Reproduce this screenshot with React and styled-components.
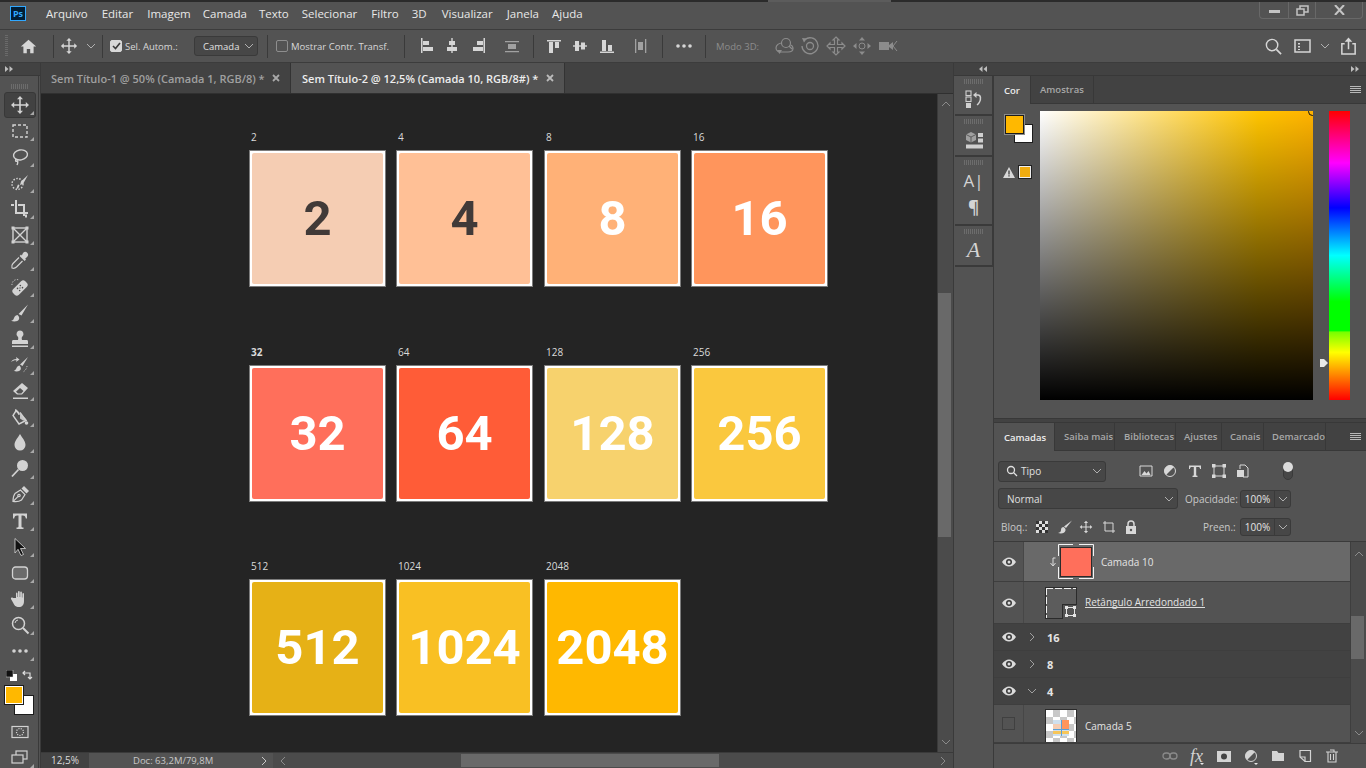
import React from 'react';
import styled, { createGlobalStyle } from 'styled-components';

const GlobalStyle = createGlobalStyle`
  html, body { margin: 0; padding: 0; background: #535353; overflow: hidden; }
  * { box-sizing: border-box; }
  body { font-family: "Open Sans", "Liberation Sans", sans-serif; color: #e4e4e4; }
`;

const Shell = styled.div`
  width: 1366px; height: 768px; display: flex; flex-direction: column; background: #535353; overflow: hidden;
`;
const TopEdge = styled.div`
  height: 2px; flex: none;
  background: linear-gradient(to right, #2b2b2b 768px, #5c5c5c 768px, #5c5c5c 891px, #2b2b2b 891px);
`;

/* menu */
const MenuBar = styled.div`
  height: 28px; flex: none; display: flex; align-items: center; background: #535353; padding: 0 0 4px 10px;
  border-bottom: 1px solid #3c3c3c;
`;
const Logo = styled.div`
  width: 16px; height: 15px; background: #001e36; border: 1px solid #31a8ff; color: #31a8ff;
  font-size: 9px; font-weight: 700; display: flex; align-items: center; justify-content: center; margin-right: 20px; line-height: 1;
`;
const MenuItem = styled.span`
  font-size: 11.5px; color: #e8e8e8; margin-right: ${p => p.$mr}px; white-space: nowrap;
`;
const WindowBox = styled.div`
  margin-left: auto; margin-right: 3px; align-self: flex-start; height: 17px; display: flex;
  border: 1px solid #686868; border-top: none; border-radius: 0 0 4px 4px; color: #c4c4c4;
`;
const WindowBtn = styled.div`
  width: ${p => p.$w}px; display: flex; align-items: center; justify-content: center;
  & + & { border-left: 1px solid #686868; }
`;

/* options bar */
const OptionsBar = styled.div`
  height: 33px; flex: none; display: flex; align-items: center; background: #535353; color: #d6d6d6;
  border-bottom: 1px solid #3c3c3c;
`;
const Grip = styled.div`
  width: 14px; height: 22px; margin-left: 0; flex: none;
  background: repeating-linear-gradient(to bottom, #6a6a6a 0 1px, transparent 1px 2px) 5px 0 / 3px 100% no-repeat;
`;
const Slot = styled.div`
  width: ${p => p.$w || 26}px; margin-left: ${p => p.$ml || 0}px; flex: none; height: 24px;
  display: flex; align-items: center; justify-content: center; color: ${p => p.$dim ? '#8c8c8c' : 'inherit'};
`;
const Sep = styled.div`
  width: 1px; height: 23px; background: #3a3a3a; flex: none; margin-left: ${p => p.$ml || 0}px;
`;
const Check = styled.div`
  width: 12px; height: 12px; border-radius: 2px; flex: none; margin-left: ${p => p.$ml}px;
  border: 1px solid ${p => p.$on ? '#d8d8d8' : '#8e8e8e'}; background: ${p => p.$on ? '#d8d8d8' : 'transparent'};
  color: #3a3a3a; display: flex; align-items: center; justify-content: center;
`;
const OptLabel = styled.span`
  font-size: 9.5px; width: ${p => p.$w}px; margin-left: ${p => p.$ml || 0}px; flex: none; white-space: nowrap;
  color: ${p => p.$dim ? '#8c8c8c' : '#d8d8d8'};
`;
const SmallSelect = styled.div`
  width: 64px; height: 20px; flex: none; background: #474747; border: 1px solid #3a3a3a; border-radius: 3px;
  font-size: 9.5px; padding-left: 8px; display: flex; align-items: center; justify-content: space-between; padding-right: 3px; color: #e0e0e0;
`;

/* workspace */
const Workspace = styled.div`
  flex: 1; min-height: 0; display: flex;
`;
const LeftColumn = styled.div`
  width: 41px; flex: none; display: flex; flex-direction: column;
  border-right: 1px solid #3a3a3a;
`;
const Strip = styled.div`
  height: 13px; flex: none; background: #424242; border-bottom: 1px solid #383838; color: #bdbdbd;
  display: flex; align-items: center; justify-content: ${p => p.$between ? 'space-between' : 'flex-start'};
  padding: ${p => p.$between ? '0 7px 0 25px' : '0 0 0 5px'};
`;
const GripRow = styled.div`
  height: 5px; flex: none; margin: ${p => p.$m || '3px auto 2px'}; width: ${p => p.$w || 20}px;
  background: repeating-linear-gradient(to right, #6c6c6c 0 1px, transparent 1px 2px);
`;
const ToolList = styled.div`
  flex: 1; display: flex; flex-direction: column; align-items: center; color: #d2d2d2; padding: 0 0 0 1px;
  border-right: 1px solid #3a3a3a; margin-right: 1px; position: relative;
`;
const Tool = styled.div`
  width: 32px; height: 26px; flex: none; position: relative; display: flex; align-items: center; justify-content: center;
  margin-top: ${p => p.$mt || 0}px;
  background: ${p => p.$active ? '#424242' : 'transparent'};
  border: 1px solid ${p => p.$active ? '#383838' : 'transparent'}; border-radius: 3px;
  &::after {
    content: ""; display: ${p => p.$plain ? 'none' : 'block'}; position: absolute; right: 1px; bottom: 2px; width: 0; height: 0;
    border-left: 4px solid transparent; border-bottom: 4px solid #a8a8a8;
  }
`;
const ColorTools = styled.div`
  width: 32px; height: 46px; position: relative; flex: none; margin-top: 6px;
`;
const SwatchBox = styled.div`
  position: absolute; left: ${p => p.$x}px; top: ${p => p.$y}px; width: ${p => p.$s}px; height: ${p => p.$s}px;
  background: ${p => p.$c}; border: 1px solid ${p => p.$b || '#111'};
  box-shadow: ${p => p.$ring ? '0 0 0 1px ' + p.$ring : 'none'};
`;
const ColorIcon = styled.div`
  position: absolute; left: ${p => p.$x}px; top: ${p => p.$y}px; line-height: 0;
`;

const Center = styled.div`
  flex: 1; min-width: 0; display: flex; flex-direction: column; border-right: 1px solid #3a3a3a;
`;
const TabBar = styled.div`
  height: 31px; flex: none; display: flex; background: #424242; border-bottom: 1px solid #303030;
`;
const DocTab = styled.div`
  width: ${p => p.$w}px; flex: none; display: flex; align-items: center; padding-left: ${p => p.$active ? 11 : 10}px;
  background: ${p => p.$active ? '#535353' : '#424242'}; border-right: 1px solid #333;
  color: ${p => p.$active ? '#ededed' : '#a0a0a0'}; font-size: 11px; font-weight: 600; white-space: nowrap;
`;
const TabClose = styled.span`
  margin-left: auto; margin-right: 10px; line-height: 0; color: ${p => p.$active ? '#bbb' : '#a8a8a8'};
`;
const DocRow = styled.div`
  flex: 1; min-height: 0; display: flex;
`;
const Canvas = styled.div`
  flex: 1; background: #242424; padding: 36px 0 0 208px;
  display: grid; grid-template-columns: 147px 148px 147px 137px; row-gap: 57.5px; align-content: start;
`;
const Cell = styled.div`
  display: flex; flex-direction: column;
`;
const TileLabel = styled.div`
  height: 20px; padding-left: 2px; font-size: 10px; line-height: 14px;
  color: #dadada; font-weight: ${p => p.$bold ? 700 : 400};
`;
const Tile = styled.div`
  width: 137px; height: 137px; background: #fff; border: 1px solid #7c7c7c; padding: 2px; display: flex;
`;
const TileFace = styled.div`
  flex: 1; border-radius: 2px; background: ${p => p.$bg}; color: ${p => p.$fg};
  display: flex; align-items: center; justify-content: center;
  font-family: Roboto, "Liberation Sans", sans-serif; font-weight: 700; font-size: 49px; line-height: 1;
`;
const VScroll = styled.div`
  width: 16px; flex: none; background: #4b4b4b; border-left: 1px solid #3a3a3a; display: flex; flex-direction: column;
  align-items: center; justify-content: space-between; padding: 5px 0; color: #8b8b8b; position: relative;
`;
const VThumb = styled.div`
  position: absolute; left: 0; right: 2px; top: ${p => p.$top}px; height: ${p => p.$h}px; background: #696969;
`;
const StatusBar = styled.div`
  height: 16px; flex: none; display: flex; background: #4b4b4b; border-top: 1px solid #3a3a3a; font-size: 9.5px; color: #dadada;
`;
const StatusZoom = styled.div`
  width: 48px; flex: none; background: #424242; padding-left: 10px; line-height: 15px; font-size: 10px;
`;
const StatusDoc = styled.div`
  width: 184px; flex: none; background: #535353; display: flex; align-items: center; padding: 0 4px 0 44px; justify-content: space-between; color: #c8c8c8;
`;
const HScroll = styled.div`
  flex: 1; position: relative; display: flex; align-items: center; justify-content: space-between; padding: 0 5px; color: #8b8b8b;
`;
const HThumb = styled.div`
  position: absolute; top: 1px; bottom: 1px; left: 188px; width: 258px; background: #696969;
`;

/* right side */
const Right = styled.div`
  width: 412px; flex: none; display: flex; flex-direction: column;
`;
const RightBody = styled.div`
  flex: 1; min-height: 0; display: flex;
`;
const Dock = styled.div`
  width: 40px; flex: none; border-right: 1px solid #3a3a3a; display: flex; flex-direction: column; color: #d0d0d0; padding-left: 1px;
`;
const DockGroup = styled.div`
  display: flex; flex-direction: column; align-items: center; padding-bottom: 2px;
  border-bottom: 2px solid #3a3a3a; border-right: 1px solid #3a3a3a;
`;
const DockIcon = styled.div`
  height: ${p => p.$h || 26}px; width: 100%; display: flex; align-items: center; justify-content: center; line-height: 1;
`;
const DockLetter = styled.span`
  font-family: ${p => p.$serif ? '"Liberation Serif", serif' : '"Open Sans", sans-serif'};
  font-style: ${p => p.$serif ? 'italic' : 'normal'}; font-weight: ${p => p.$bold ? 700 : 400}; font-size: ${p => p.$size}px; color: #d4d4d4;
`;
const Panels = styled.div`
  flex: 1; min-width: 0; display: flex; flex-direction: column;
`;
const PanelTabs = styled.div`
  height: 28px; flex: none; display: flex; background: #424242; border-bottom: 1px solid #383838; align-items: stretch;
`;
const PanelTab = styled.div`
  width: ${p => p.$w}px; flex: none; display: flex; align-items: center; padding-left: ${p => p.$pl || 9}px; overflow: hidden; white-space: nowrap;
  font-size: 9.5px; font-weight: 600; border-right: 1px solid #383838;
  background: ${p => p.$active ? '#535353' : 'transparent'}; color: ${p => p.$active ? '#ededed' : '#a8a8a8'};
  margin-bottom: ${p => p.$active ? '-1px' : '0'};
`;
const PanelMenu = styled.div`
  margin-left: auto; margin-right: 5px; width: 11px; align-self: center; height: 8px;
  background: repeating-linear-gradient(to bottom, #b8b8b8 0 1px, transparent 1px 2px);
`;
const ColorBody = styled.div`
  height: 315px; flex: none; display: flex; padding: 7px 16px 0 46px; position: relative;
  border-bottom: 1px solid #383838;
`;
const Picker = styled.div`
  width: 273px; height: 289px; flex: none; position: relative; overflow: hidden;
  background: linear-gradient(to top, #000, rgba(0,0,0,0)), linear-gradient(to right, #fff, #ffc400 80%, #ffb200);
`;
const PickerDot = styled.div`
  position: absolute; right: -4px; top: -4px; width: 9px; height: 9px; border-radius: 50%; border: 1px solid #111;
`;
const Hue = styled.div`
  width: 21px; height: 289px; flex: none; margin-left: 16px; position: relative;
  background: linear-gradient(to bottom, #f00, #f0f 18%, #00f 33.5%, #0ff 50%, #0f0 66%, #0f0 76%, #7f0 76.5%, #ff0 83.5%, #f00);
`;
const HueMark = styled.div`
  position: absolute; left: -9px; top: 248px; width: 8px; height: 8px; background: #e8e8e8;
  clip-path: polygon(0 0, 50% 0, 100% 50%, 50% 100%, 0 100%);
`;
const Warn = styled.div`
  position: absolute; left: 9px; top: 62px; display: flex; align-items: center; gap: 4px; line-height: 0; color: #d8d8d8;
`;
const WarnSwatch = styled.div`
  width: 12px; height: 12px; background: #f0ac10; border: 1px solid #efefef; outline: 1px solid #222;
`;
const PanelGap = styled.div`
  height: 4px; flex: none; background: #424242; border-bottom: 1px solid #383838;
`;
const LayersHead = styled.div`
  height: 91px; flex: none; display: flex; flex-direction: column; padding: 0 4px;
  border-bottom: 1px solid #3a3a3a;
`;
const HeadRow = styled.div`
  height: ${p => p.$h}px; flex: none; display: flex; align-items: center; font-size: 10px; color: #d8d8d8;
  padding-top: ${p => p.$pt || 0}px;
`;
const Dropdown = styled.div`
  width: ${p => p.$w}px; height: 21px; flex: none; background: #474747; border: 1px solid #3a3a3a; border-radius: 3px;
  display: flex; align-items: center; justify-content: space-between; font-size: 10px; padding: 0 3px 0 ${p => p.$pl || 8}px; color: #e0e0e0;
`;
const DropLabel = styled.span`
  display: flex; align-items: center; gap: 3px;
`;
const HeadIcon = styled.div`
  width: 24px; margin-left: ${p => p.$ml || 0}px; flex: none; display: flex; justify-content: center; line-height: 0; color: #d8d8d8;
`;
const FieldLabel = styled.span`
  margin-left: ${p => p.$ml || 0}px; flex: none; font-size: 10px; color: #c8c8c8; width: ${p => p.$w}px; white-space: nowrap;
`;
const Field = styled.div`
  width: 51px; height: 18px; margin-left: 5px; flex: none; display: flex; background: #474747; border: 1px solid #3a3a3a; border-radius: 3px; font-size: 10px;
`;
const FieldValue = styled.div`
  flex: 1; text-align: center; line-height: 16px; color: #e4e4e4; border-right: 1px solid #3a3a3a;
`;
const FieldArrow = styled.div`
  width: 15px; display: flex; align-items: center; justify-content: center;
`;
const Toggle = styled.div`
  width: 10px; height: 18px; margin-left: 28px; border: 1px solid #3a3a3a; border-radius: 5px; position: relative; background: #474747;
  &::before { content: ""; position: absolute; left: -1px; top: -1px; width: 10px; height: 10px; border-radius: 50%; background: #dcdcdc; }
`;
const LayerArea = styled.div`
  height: 201px; flex: none; display: flex;
`;
const LayerList = styled.div`
  flex: 1; min-width: 0; display: flex; flex-direction: column; overflow: hidden;
`;
const LayerRow = styled.div`
  height: ${p => p.$h}px; flex: none; display: flex; align-items: stretch; overflow: hidden;
  background: ${p => p.$bg}; border-bottom: 1px solid #3e3e3e; font-size: 10px; color: #e4e4e4;
`;
const EyeCol = styled.div`
  width: 30px; flex: none; display: flex; align-items: center; justify-content: center; color: #dcdcdc;
  border-right: 1px solid ${p => p.$line ? '#474747' : 'transparent'};
`;
const EmptyEye = styled.div`
  width: 13px; height: 13px; border: 1px solid #404040;
`;
const LayerMain = styled.div`
  flex: 1; min-width: 0; display: flex; align-items: ${p => p.$top ? 'flex-start' : 'center'};
  padding-left: ${p => p.$pl}px; padding-top: ${p => p.$top ? 4 : 0}px; background: ${p => p.$bg || 'transparent'};
`;
const ClipArrow = styled.div`
  width: 8px; margin-right: 1px; line-height: 0; color: #dcdcdc;
`;
const ThumbFrame = styled.div`
  width: 36px; height: 35px; flex: none; position: relative; padding: 3px 2px 2px; line-height: 0; color: #f4f4f4; display: flex;
`;
const FrameMarks = styled.svg`
  position: absolute; left: 0; top: 0;
`;
const Thumb = styled.div`
  width: ${p => p.$w}px; height: ${p => p.$h}px; flex: none; position: relative; line-height: 0;
  background: ${p => p.$bg || '#5c5c5c'}; border: 1px solid #2b2b2b;
`;
const ThumbBadge = styled.div`
  position: absolute; right: -1px; bottom: -1px; width: 15px; height: 15px; background: #535353; border: 1px solid #2b2b2b; border-width: 1px 0 0 1px;
  color: #e4e4e4; display: flex; align-items: center; justify-content: center;
`;
const ThumbDash = styled.div`
  position: absolute; inset: 0;
  background:
    repeating-linear-gradient(to right, #f0f0f0 0 7px, transparent 7px 9px) top / 100% 1px no-repeat,
    repeating-linear-gradient(to bottom, #f0f0f0 0 7px, transparent 7px 9px) left / 1px 100% no-repeat;
`;
const CheckerThumb = styled.div`
  width: 32px; height: 36px; flex: none; border: 1px solid #2b2b2b; border-bottom: none; position: relative; display: flex; align-items: center; justify-content: center;
  background: conic-gradient(#c8c8c8 25%, #fff 0 50%, #c8c8c8 0 75%, #fff 0) 0 0 / 14px 14px;
`;
const LayerName = styled.span`
  margin-left: ${p => p.$ml || 0}px; margin-top: ${p => p.$mt || 0}px; white-space: nowrap;
  font-weight: ${p => p.$bold ? 700 : 400}; font-size: ${p => p.$bold ? 11 : 10}px;
  ${p => p.$underline ? 'display: inline-block; width: 120px; border-bottom: 1px solid #dcdcdc; line-height: 10px;' : ''}
`;
const Twisty = styled.div`
  width: 12px; margin-left: 1px; margin-right: 9px; flex: none; line-height: 0; color: #a0a0a0;
  display: flex; justify-content: center;
`;
const LayerScroll = styled.div`
  width: 16px; flex: none; background: #4b4b4b; position: relative; display: flex; flex-direction: column; justify-content: space-between;
  align-items: center; padding: 7px 0 5px; color: #8b8b8b; border-left: 1px solid #3e3e3e;
`;
const LayerFoot = styled.div`
  flex: 1; display: flex; align-items: center; justify-content: flex-end; padding-right: 21px; gap: 0; color: #d4d4d4;
  border-top: 1px solid #3c3c3c;
`;
const FootIcon = styled.div`
  width: 27px; height: 16px; flex: none; display: flex; align-items: center; justify-content: center; line-height: 0; position: relative;
  color: ${p => p.$dim ? '#8a8a8a' : 'inherit'};
  &::after {
    content: ""; display: ${p => p.$tri ? 'block' : 'none'}; position: absolute; right: 6px; bottom: -1px; width: 0; height: 0;
    border-left: 2px solid transparent; border-right: 2px solid transparent; border-top: 2px solid #e8e8e8;
  }
`;
const FxText = styled.span`
  font-family: "Liberation Serif", serif; font-style: italic; font-size: 18px; line-height: 1; color: #d4d4d4;
`;

/* icons */
const Ico = ({ s = 20, w, h, vb, children, ...rest }) => (
  <svg width={w || s} height={h || s} viewBox={vb || '0 0 20 20'} fill="currentColor" {...rest}>{children}</svg>
);
const St = p => <g fill="none" stroke="currentColor" strokeWidth="1.4" {...p} />;

const Chevron = ({ dir = 'down', c = '#b0b0b0' }) => {
  const d = { down: 'M1 3l4 4 4-4', up: 'M1 7l4-4 4 4', right: 'M3 1l4 4-4 4', left: 'M7 1L3 5l4 4' }[dir];
  return <svg width="10" height="10" viewBox="0 0 10 10" fill="none" stroke={c} strokeWidth="1"><path d={d} /></svg>;
};
const DoubleTri = ({ left }) => (
  <svg width="8" height="6" viewBox="0 0 8 6" fill="currentColor">
    {left ? <path d="M3.5 0v6L0 3zM8 0v6L4.500 3z" /> : <path d="M0 0v6l3.500-3zM4.500 0v6L8 3z" />}
  </svg>
);
const MoveIcon = ({ s = 20 }) => (
  <Ico s={s}><path d="M10 1l3 3.200h-2.200v5h5V7L19 10l-3.200 3v-2.200h-5v5H13L10 19l-3-3.200h2.200v-5h-5V13L1 10l3.200-3v2.200h5v-5H7z" /></Ico>
);
const Eye = () => (
  <svg width="14" height="10" viewBox="0 0 14 10">
    <path d="M0 5c2-3 4.500-4.500 7-4.500S12 2 14 5c-2 3-4.500 4.500-7 4.500S2 8 0 5z" fill="#dcdcdc" />
    <circle cx="7" cy="5" r="3" fill="#3a3a3a" />
    <circle cx="7" cy="5" r="1.500" fill="#dcdcdc" />
  </svg>
);
const AlignBar = ({ kind }) => {
  const shapes = {
    l: <><path d="M5 2h1.500v15H5z" /><path d="M7 5h6v4H7zM7 11h10v4H7z" /></>,
    c: <><path d="M9.300 2h1.400v15H9.300z" /><path d="M7 5h6v4H7zM5 11h10v4H5z" /></>,
    r: <><path d="M15.500 2H17v15h-1.500z" /><path d="M9 5h6v4H9zM5 11h10v4H5z" /></>,
    d: <g opacity=".6"><path d="M3 5h14v1.300H3zM3 15h14v1.300H3zM6 8h8v5H6z" /></g>,
    t: <><path d="M3 4h14v1.500H3z" /><path d="M5 6h4v11H5zM11 6h4v6h-4z" /></>,
    m: <><path d="M3 9.300h14v1.400H3z" /><path d="M5 5h4v10H5zM11 6.500h4v7h-4z" /></>,
    b: <><path d="M4 15.500h14V17H4z" /><path d="M6 4h4v11H6zM12 9h4v6h-4z" /></>,
    e: <g opacity=".6"><path d="M4 3h1.300v14H4zM14 3h1.300v14H14zM7 6h5v8H7z" /></g>
  };
  return <Ico>{shapes[kind]}</Ico>;
};
const Dots = ({ w = 18 }) => (
  <svg width={w} height="4" viewBox="0 0 18 4" fill="currentColor"><circle cx="3" cy="2" r="1.800" /><circle cx="9" cy="2" r="1.800" /><circle cx="15" cy="2" r="1.800" /></svg>
);

const toolIcons = [
  <MoveIcon />,
  <Ico><St strokeDasharray="3 2"><rect x="3" y="4" width="14" height="12" /></St></Ico>,
  <Ico><St><ellipse cx="10.500" cy="8" rx="7" ry="5" transform="rotate(-10 10 8)" /><path d="M6 12c-1 2 0 3 1 2s1 2 0 4" /></St></Ico>,
  <Ico><St strokeDasharray="1.500 1.500"><circle cx="7.500" cy="11" r="5.500" /></St><path d="M18 2l-5 9-3 1 1-3.500zM9.500 12c-.5 3-2 4-3.500 4 1-1 1-3 2-4.500z" /></Ico>,
  <Ico><path d="M5 1h2v12h11v2H5zM1 5h3v2H1zM8 5h7v12h-2V7H8zM15 15.500h2v3h-2z" /></Ico>,
  <Ico><St><rect x="3" y="3" width="14" height="14" /><path d="M3 3l14 14M17 3L3 17" /></St><path d="M1.500 1.500h3v3h-3zM15.500 1.500h3v3h-3zM1.500 15.500h3v3h-3zM15.500 15.500h3v3h-3z" /></Ico>,
  <Ico><path d="M13 2c1.500-1.500 3-1.500 4.200-.2 1.300 1.200 1.300 2.700-.2 4.200l-1.800 1.800.8.8-1.400 1.400-5-5 1.400-1.400.8.800z" /><St strokeWidth="1.200"><path d="M9 6.500l-6 6c-1 1-1.500 3-1 4.500 1.500.5 3.500 0 4.500-1l6-6" /></St></Ico>,
  <Ico><g transform="rotate(-45 10 11)"><rect x="1.500" y="7" width="17" height="8" rx="3" /><g fill="#4d4d4d"><circle cx="8" cy="9.500" r=".8" /><circle cx="12" cy="9.500" r=".8" /><circle cx="8" cy="12.500" r=".8" /><circle cx="12" cy="12.500" r=".8" /><rect x="9.400" y="10.400" width="1.200" height="1.200" /></g></g><St strokeDasharray="1.200 1.500" strokeWidth="1"><path d="M2 8a5 5 0 0 1 7-5" /></St></Ico>,
  <Ico><path d="M18 1.500l-6.500 11-3-1.500zM7.500 12c-1 0-3 1-3.500 3s-1.500 2.500-3 2.800c2.500 1 7 1 8-1.500.5-1.500 0-3-1.500-4.300z" /></Ico>,
  <Ico><path d="M10 1.500a3.500 3.500 0 0 1 2.200 6.200c-.5.500-.7 1.300-.2 3.300h4.500c1 0 1.500.500 1.500 2V15H2v-2c0-1.500.5-2 1.500-2H8c.5-2 .3-2.800-.2-3.300A3.500 3.500 0 0 1 10 1.500zM2 16.500h16V18H2z" /></Ico>,
  <Ico><path d="M18 2l-5.500 9-2.500-1.500zM9.500 10.500c-1 0-2.500 1-3 2.500s-1.500 2.500-2.800 2.800c2 1 6 1 7-1.200.5-1.300 0-3-1.200-4.100z" /><path d="M1 7c1-2 3-3 5.500-3L6 2l3.500 2.500L6 7l.5-1.800C4.500 5 3 5.500 1 7z" /><St strokeDasharray="1.200 1.500" strokeWidth="1"><path d="M17 11a8 8 0 0 1-4 6" /></St></Ico>,
  <Ico><path d="M12 2l6 5-6 6.500H7L3 10zM6 10.800l2 1.700h3.300l2.200-2.500-3.500-3z" fillRule="evenodd" /><path d="M3 16.500h15V18H3z" /></Ico>,
  <Ico><St><path d="M6.500 3L3 8.500 9 17l7-3.500-6-8" /></St><path d="M5 2.500c1-1 5 3 5 5l-1.500.5C7.500 5.500 4.500 4 5 2.500z" /><circle cx="16.500" cy="16" r="1.800" /><path d="M10 6.500l6 5.500 1 2-4-.5-3-2z" opacity=".9" /></Ico>,
  <Ico><path d="M10 1c2 3.500 5.500 7 5.500 11a5.500 5.500 0 0 1-11 0C4.500 8 8 4.500 10 1z" /></Ico>,
  <Ico><circle cx="12.500" cy="6.500" r="5.500" /><St strokeWidth="1.800"><path d="M8.500 10.500L2 17.500" /></St></Ico>,
  <Ico><St strokeWidth="1.200"><path d="M3 16.500c0-3 .5-6 2-8l5.500-3.500 4.500 4.500-3.500 5.500c-2 1.500-5 2-8.500 1.500z" /><path d="M3.200 16.300l5-5" /><circle cx="9" cy="10.500" r="1.200" /></St><path d="M11.500 3.500L14 1l5 5-2.500 2.500z" /></Ico>,
  <Ico><path d="M3 2.500h14v5h-1.200c-.3-2-1-3-3-3h-1.300v11c0 .8.5 1 2 1V18H6.500v-1.500c1.500 0 2-.2 2-1v-11H7.200c-2 0-2.700 1-3 3H3z" /></Ico>,
  <svg width="20" height="20" viewBox="0 0 20 20"><path d="M5 1.500l10.500 10h-5l3 6-2.500 1-3-6.200L5 16z" fill="#111" stroke="#d8d8d8" strokeWidth=".8" /></svg>,
  <Ico><rect x="2.500" y="4" width="15" height="12" rx="3" fill="#6b6b6b" stroke="currentColor" strokeWidth="1.300" /></Ico>,
  <Ico><path d="M6 9V4.500c0-1.200 1.500-1.200 1.500 0V8h.5V2.800c0-1.200 1.700-1.200 1.700 0V8h.5V3.300c0-1.200 1.700-1.200 1.700 0V8.500h.5V5c0-1.200 1.600-1.200 1.600 0v7c0 4-2 6-5 6-3.500 0-4.500-1.500-6-4.500l-2-3.500c-.5-1 1-2 2-1z" /></Ico>,
  <Ico><St strokeWidth="1.500"><circle cx="8.500" cy="8.500" r="6" /><path d="M13 13l5.500 5.500" strokeWidth="2" /><path d="M5 8a3.500 3.500 0 0 1 3-3" strokeWidth="1" /></St></Ico>,
  <Dots />
];

const tiles = [
  { n: '2', bg: '#f5cdb3', fg: '#413a38' },
  { n: '4', bg: '#ffc096', fg: '#413a38' },
  { n: '8', bg: '#ffb177', fg: '#fff' },
  { n: '16', bg: '#ff955c', fg: '#fff' },
  { n: '32', bg: '#ff6f5b', fg: '#fff', bold: true },
  { n: '64', bg: '#ff5c37', fg: '#fff' },
  { n: '128', bg: '#f7d26d', fg: '#fff' },
  { n: '256', bg: '#fac83e', fg: '#fff' },
  { n: '512', bg: '#e6b116', fg: '#fff' },
  { n: '1024', bg: '#f9c023', fg: '#fff' },
  { n: '2048', bg: '#ffb800', fg: '#fff' }
];

const menus = [
  ['Arquivo', 14], ['Editar', 14], ['Imagem', 12], ['Camada', 12], ['Texto', 13], ['Selecionar', 14],
  ['Filtro', 13], ['3D', 15], ['Visualizar', 14], ['Janela', 13], ['Ajuda', 0]
];

const MenuRow = () => (
  <MenuBar>
    <Logo>Ps</Logo>
    {menus.map(([m, r]) => <MenuItem key={m} $mr={r}>{m}</MenuItem>)}
    <WindowBox>
      <WindowBtn $w={28}><svg width="11" height="6" viewBox="0 0 11 6"><rect y="3" width="11" height="3" fill="#c4c4c4" /></svg></WindowBtn>
      <WindowBtn $w={27}>
        <svg width="13" height="11" viewBox="0 0 13 11" fill="none" stroke="#c4c4c4" strokeWidth="1.500"><rect x="4" y="1" width="8" height="6" /><rect x="1" y="4" width="7" height="6" fill="#535353" /></svg>
      </WindowBtn>
      <WindowBtn $w={47}><svg width="11" height="10" viewBox="0 0 11 10" stroke="#c4c4c4" strokeWidth="2"><path d="M1 0l9 10M10 0L1 10" /></svg></WindowBtn>
    </WindowBox>
  </MenuBar>
);

const Options = () => (
  <OptionsBar>
    <Grip />
    <Slot $w={28}><Ico s={17}><path d="M10 2l9 8h-3v8h-4v-5H8v5H4v-8H1z" /></Ico></Slot>
    <Sep $ml={11} />
    <Slot $w={30}><MoveIcon s={18} /></Slot>
    <Slot $w={14}><Chevron /></Slot>
    <Sep $ml={4} />
    <Check $ml={7} $on><svg width="9" height="8" viewBox="0 0 9 8" fill="none" stroke="#3a3a3a" strokeWidth="1.600"><path d="M1 4l2.500 2.500L8 1" /></svg></Check>
    <OptLabel $ml={3} $w={69}>Sel. Autom.:</OptLabel>
    <SmallSelect>Camada <Chevron /></SmallSelect>
    <Sep $ml={9} />
    <Check $ml={8} />
    <OptLabel $ml={3} $w={113}>Mostrar Contr. Transf.</OptLabel>
    <Sep />
    <Slot $ml={8}><AlignBar kind="l" /></Slot>
    <Slot><AlignBar kind="c" /></Slot>
    <Slot><AlignBar kind="r" /></Slot>
    <Slot $ml={8}><AlignBar kind="d" /></Slot>
    <Sep $ml={8} />
    <Slot $ml={7}><AlignBar kind="t" /></Slot>
    <Slot><AlignBar kind="m" /></Slot>
    <Slot><AlignBar kind="b" /></Slot>
    <Slot $ml={9}><AlignBar kind="e" /></Slot>
    <Sep $ml={8} />
    <Slot $ml={8}><Dots /></Slot>
    <Sep $ml={8} />
    <OptLabel $ml={10} $w={41} $dim>Modo 3D:</OptLabel>
    <Slot $ml={14} $dim><Ico><St strokeWidth="1.200"><circle cx="12" cy="7" r="4.500" /><path d="M8 7c-3 0-6 2-6 5s3 4 5 4h7c3 0 5-1 5-3.500 0-2-1-3-2.500-3.500M15 10l3 3" /></St><path d="M3 14l5 0-2.500 4z" /></Ico></Slot>
    <Slot $dim><Ico><St strokeWidth="1.300"><path d="M5 3.500A8 8 0 1 1 2 10" /><circle cx="10" cy="10" r="3.500" /></St><path d="M2 2l5 .5-3 4z" /></Ico></Slot>
    <Slot $dim><Ico><St strokeWidth="1.200"><path d="M10 1l3 3-1.500 0v4.500H16V7l3 3-3 3v-1.500h-4.500V16H13l-3 3-3-3h1.500v-4.500H4V13l-3-3 3-3v1.500h4.500V4H7z" /></St></Ico></Slot>
    <Slot $dim><Ico><circle cx="10" cy="10" r="3" fill="none" stroke="currentColor" /><path d="M10 1l3 3.500H7zM10 19l-3-3.500h6zM1 10l3.500-3v6zM19 10l-3.500 3V7z" /></Ico></Slot>
    <Slot $dim><Ico><path d="M1 6h10v8H1zM11 9l4-3v8l-4-3z" /><St strokeWidth="1"><path d="M19 5l-4 5 4 5" /></St></Ico></Slot>
    <Slot $ml={359}><Ico s={19}><St strokeWidth="1.500"><circle cx="8.500" cy="8.500" r="6" /><path d="M13 13l5 5" strokeWidth="1.800" /></St></Ico></Slot>
    <Slot $ml={4}><Ico><St strokeWidth="1.500"><rect x="2" y="4" width="15" height="12" /></St><path d="M5 7h2v1.500H5zM5 10h2v1.500H5zM5 13h2v1H5z" /></Ico></Slot>
    <Slot $ml={2} $w={14}><Chevron /></Slot>
    <Slot $ml={3}><Ico s={19}><St strokeWidth="1.600"><path d="M6 7H3v11h14V7h-3" /></St><path d="M9.200 3.500h1.600V13H9.200zM10 .5l4 4.500H6z" /></Ico></Slot>
  </OptionsBar>
);

const Tools = () => (
  <LeftColumn>
    <Strip><DoubleTri /></Strip>
    <ToolList>
      <GripRow $w={18} $m="8px auto 3px" />
      {toolIcons.map((ic, i) => <Tool key={i} $active={i === 0}>{ic}</Tool>)}
      <ColorTools>
        <ColorIcon $x={2} $y={0}>
          <svg width="11" height="11"><rect x="4" y="4" width="7" height="7" fill="#fff" /><rect width="7" height="7" fill="#111" stroke="#ddd" strokeWidth=".5" /></svg>
        </ColorIcon>
        <ColorIcon $x={18} $y={0}>
          <svg width="11" height="11" viewBox="0 0 11 11" fill="none" stroke="#ddd" strokeWidth="1.200"><path d="M1 3h7v6M3 1L1 3l2 2M6 7l2 2 2-2" /></svg>
        </ColorIcon>
        <SwatchBox $x={10} $y={25} $s={20} $c="#fff" $b="#1c1c1c" />
        <SwatchBox $x={1} $y={16} $s={18} $c="#ffb800" $b="#fff" $ring="#1c1c1c" />
      </ColorTools>
      <Tool $plain $mt={3}>
        <Ico><St strokeWidth="1.200"><rect x="2" y="4.500" width="16" height="11" /><circle cx="10" cy="10" r="3.500" strokeDasharray="1.200 1.200" /></St></Ico>
      </Tool>
      <Tool>
        <Ico><St strokeWidth="1.200"><rect x="6" y="3" width="11" height="8" /><rect x="2" y="7" width="11" height="8" fill="#535353" /></St></Ico>
      </Tool>
    </ToolList>
  </LeftColumn>
);

const Document = () => (
  <Center>
    <TabBar>
      <DocTab $w={250}>Sem Título-1 @ 50% (Camada 1, RGB/8) *<TabClose><svg width="8" height="8" viewBox="0 0 8 8" stroke="currentColor" strokeWidth="1.800"><path d="M1 1l6 6M7 1L1 7" /></svg></TabClose></DocTab>
      <DocTab $w={274} $active>Sem Título-2 @ 12,5% (Camada 10, RGB/8#) *<TabClose $active><svg width="8" height="8" viewBox="0 0 8 8" stroke="currentColor" strokeWidth="1.800"><path d="M1 1l6 6M7 1L1 7" /></svg></TabClose></DocTab>
    </TabBar>
    <DocRow>
      <Canvas>
        {tiles.map(t => (
          <Cell key={t.n}>
            <TileLabel $bold={t.bold}>{t.n}</TileLabel>
            <Tile><TileFace $bg={t.bg} $fg={t.fg}>{t.n}</TileFace></Tile>
          </Cell>
        ))}
      </Canvas>
      <VScroll>
        <Chevron dir="up" c="#8b8b8b" />
        <VThumb $top={199} $h={244} />
        <Chevron c="#8b8b8b" />
      </VScroll>
    </DocRow>
    <StatusBar>
      <StatusZoom>12,5%</StatusZoom>
      <StatusDoc>Doc: 63,2M/79,8M<Chevron dir="right" c="#c8c8c8" /></StatusDoc>
      <HScroll>
        <Chevron dir="left" c="#8b8b8b" />
        <HThumb />
        <Chevron dir="right" c="#8b8b8b" />
      </HScroll>
    </StatusBar>
  </Center>
);

const DockColumn = () => (
  <Dock>
    <DockGroup>
      <GripRow $w={19} />
      <DockIcon>
        <Ico><St strokeWidth="1.100"><rect x="2" y="2" width="5" height="4.500" /><rect x="2" y="8" width="5" height="4.500" /></St><path d="M2 14h5v5H2z" /><St strokeWidth="1.500"><path d="M10 6h4c3 0 3 4 1.500 7-.5 1-1 2-2.500 3" /></St><path d="M9 6l3.500-3v6z" /></Ico>
      </DockIcon>
    </DockGroup>
    <DockGroup>
      <GripRow $w={19} />
      <DockIcon $h={27}>
        <Ico><path d="M7 2l5 2.500V10l-5 2.500L2 10V4.500z" fill="#a0a0a0" /><St strokeWidth=".8" stroke="#4d4d4d"><path d="M2 4.500L7 7l5-2.500M7 7v5.500" /></St><path d="M14 3h5v4h-5zM14 8.500h5v4h-5zM2 14.500h17v4H2z" /></Ico>
      </DockIcon>
    </DockGroup>
    <DockGroup>
      <GripRow $w={19} />
      <DockIcon><DockLetter $size={17}>A|</DockLetter></DockIcon>
      <DockIcon $h={28}><DockLetter $size={17} $bold>¶</DockLetter></DockIcon>
      <DockIcon $h={1} />
    </DockGroup>
    <DockGroup>
      <GripRow $w={19} />
      <DockIcon $h={27}><DockLetter $serif $size={22}>A</DockLetter></DockIcon>
    </DockGroup>
  </Dock>
);

const ColorPanel = () => (
  <>
    <PanelTabs>
      <PanelTab $w={37} $active $pl={10}>Cor</PanelTab>
      <PanelTab $w={63}>Amostras</PanelTab>
      <PanelMenu />
    </PanelTabs>
    <ColorBody>
      <SwatchBox $x={20} $y={20} $s={19} $c="#fff" $b="#1c1c1c" />
      <SwatchBox $x={11} $y={11} $s={19} $c="#ffb800" $b="#1c1c1c" $ring="#8a8a8a" />
      <Warn>
        <svg width="12" height="11" viewBox="0 0 12 11"><path d="M6 0l6 11H0z" fill="#d8d8d8" /><path d="M5.400 3.500h1.200v4H5.400zM5.400 8.300h1.200v1.200H5.400z" fill="#333" /></svg>
        <WarnSwatch />
      </Warn>
      <Picker><PickerDot /></Picker>
      <Hue><HueMark /></Hue>
    </ColorBody>
    <PanelGap />
  </>
);

const LayerIconFilter = () => (
  <>
    <HeadIcon $ml={28}><Ico s={14} vb="0 0 14 14"><path d="M1 2h12v10H1z" fill="none" stroke="currentColor" /><path d="M2.500 11l3-4 2 2.500L9.500 7l2 4z" /></Ico></HeadIcon>
    <HeadIcon><Ico s={14} vb="0 0 14 14"><circle cx="7" cy="7" r="5.500" fill="none" stroke="currentColor" /><path d="M11 3L3 11A5.500 5.500 0 0 1 11 3z" /></Ico></HeadIcon>
    <HeadIcon $ml={1}><Ico s={14} vb="0 0 14 14"><path d="M1 1.500h12v3.500h-1c0-1.500-.5-2-2-2H8.200v8c0 .5.300.7 1.300.7V13h-5v-1.300c1 0 1.300-.2 1.300-.7v-8H4c-1.500 0-2 .5-2 2H1z" /></Ico></HeadIcon>
    <HeadIcon><Ico s={14} vb="0 0 14 14"><rect x="2" y="2" width="10" height="10" fill="none" stroke="currentColor" /><path d="M0 0h3.500v3.500H0zM10.500 0H14v3.500h-3.500zM0 10.500h3.500V14H0zM10.500 10.500H14V14h-3.500z" /></Ico></HeadIcon>
    <HeadIcon><Ico s={14} vb="0 0 14 14"><path d="M4 5V1h5l3 3v9H7" fill="none" stroke="currentColor" /><path d="M1 6h7v7H1z" /></Ico></HeadIcon>
    <Toggle />
  </>
);

const LayersPanel = () => (
  <>
    <PanelTabs>
      <PanelTab $w={61} $active $pl={10}>Camadas</PanelTab>
      <PanelTab $w={60}>Saiba mais</PanelTab>
      <PanelTab $w={61}>Bibliotecas</PanelTab>
      <PanelTab $w={46} $pl={8}>Ajustes</PanelTab>
      <PanelTab $w={42} $pl={8}>Canais</PanelTab>
      <PanelTab $w={62} $pl={8}>Demarcado</PanelTab>
      <PanelMenu />
    </PanelTabs>
    <LayersHead>
      <HeadRow $h={34} $pt={6}>
        <Dropdown $w={108} $pl={7}>
          <DropLabel><Ico s={12} vb="0 0 12 12"><St strokeWidth="1.300"><circle cx="5" cy="5" r="3.500" /><path d="M7.500 7.500L11 11" /></St></Ico>Tipo</DropLabel>
          <Chevron />
        </Dropdown>
        <LayerIconFilter />
      </HeadRow>
      <HeadRow $h={27}>
        <Dropdown $w={180}>Normal<Chevron /></Dropdown>
        <FieldLabel $ml={7} $w={50}>Opacidade:</FieldLabel>
        <Field><FieldValue>100%</FieldValue><FieldArrow><Chevron /></FieldArrow></Field>
      </HeadRow>
      <HeadRow $h={29}>
        <FieldLabel $ml={3} $w={29}>Bloq.:</FieldLabel>
        <HeadIcon>
          <svg width="12" height="12" viewBox="0 0 12 12"><rect width="12" height="12" fill="#ddd" /><path d="M0 0h3v3H0zM6 0h3v3H6zM3 3h3v3H3zM9 3h3v3H9zM0 6h3v3H0zM6 6h3v3H6zM3 9h3v3H3zM9 9h3v3H9z" fill="#333" /></svg>
        </HeadIcon>
        <HeadIcon $ml={-1}><Ico s={14} vb="0 0 14 14"><path d="M14 .5L8 8 6 6.500zM5.500 7C4 7 3 8 3 10c0 1.500-1 2.500-3 3 3 1 7 .5 7.500-2.500C7.800 9 7 8 5.500 7z" /></Ico></HeadIcon>
        <HeadIcon $ml={-3}><MoveIcon s={14} /></HeadIcon>
        <HeadIcon $ml={-1}><Ico s={14} vb="0 0 14 14"><St strokeWidth="1"><path d="M3 1v10h10M1 3h10v10" /></St></Ico></HeadIcon>
        <HeadIcon $ml={-2}><Ico s={14} vb="0 0 14 14"><path d="M2 6h10v8H2z" /><path d="M4 6V4a3 3 0 0 1 6 0v2" fill="none" stroke="currentColor" strokeWidth="1.500" /><circle cx="7" cy="10" r="1.200" fill="#535353" /></Ico></HeadIcon>
        <FieldLabel $ml={60} $w={32}>Preen.:</FieldLabel>
        <Field><FieldValue>100%</FieldValue><FieldArrow><Chevron /></FieldArrow></Field>
      </HeadRow>
    </LayersHead>
    <LayerArea>
      <LayerList>
        <LayerRow $h={40} $bg="#535353">
          <EyeCol $line><Eye /></EyeCol>
          <LayerMain $pl={25} $bg="#696969">
            <ClipArrow><svg width="8" height="10" viewBox="0 0 8 10" fill="none" stroke="currentColor"><path d="M6.500 1H4v7M1.500 6L4 9l2.500-3" /></svg></ClipArrow>
            <ThumbFrame>
              <Thumb $w={32} $h={30} $bg="#ff6f5b" />
              <FrameMarks width="36" height="35" viewBox="0 0 36 35" fill="none" stroke="currentColor">
                <path d="M.5 12V.5H15M21 .5h14.500V12M.5 23v11.500H15M21 34.500h14.500V23" />
              </FrameMarks>
            </ThumbFrame>
            <LayerName $ml={7}>Camada 10</LayerName>
          </LayerMain>
        </LayerRow>
        <LayerRow $h={42} $bg="#535353">
          <EyeCol $line><Eye /></EyeCol>
          <LayerMain $pl={21}>
            <Thumb $w={32} $h={32}>
              <ThumbDash />
              <ThumbBadge><svg width="11" height="11" viewBox="0 0 11 11" fill="none" stroke="#e4e4e4"><rect x="1.500" y="1.500" width="8" height="8" rx="1" /><path d="M0 0h3v3H0zM8 0h3v3H8zM0 8h3v3H0zM8 8h3v3H8z" fill="#e4e4e4" stroke="none" /></svg></ThumbBadge>
            </Thumb>
            <LayerName $ml={8} $underline>Retângulo Arredondado 1</LayerName>
          </LayerMain>
        </LayerRow>
        {[['16', 'right'], ['8', 'right'], ['4', 'down']].map(([n, d]) => (
          <LayerRow key={n} $h={27} $bg="#424242">
            <EyeCol><Eye /></EyeCol>
            <LayerMain $pl={1}>
              <Twisty><Chevron dir={d} c="#a0a0a0" /></Twisty>
              <LayerName $bold>{n}</LayerName>
            </LayerMain>
          </LayerRow>
        ))}
        <LayerRow $h={38} $bg="#535353">
          <EyeCol $line><EmptyEye /></EyeCol>
          <LayerMain $pl={21} $top>
            <CheckerThumb>
              <svg width="16" height="16" viewBox="0 0 16 16"><rect width="16" height="16" fill="#cfe0ee" /><rect x="9" width="7" height="9" fill="#ff955c" /><rect y="4" width="8" height="5" fill="#f5cdb3" /><rect y="11" width="16" height="3" fill="#f7c65a" /><rect x="8" width="1" height="16" fill="#5aa0d8" /><rect y="9" width="16" height="1" fill="#5aa0d8" /></svg>
            </CheckerThumb>
            <LayerName $ml={8} $mt={10}>Camada 5</LayerName>
          </LayerMain>
        </LayerRow>
      </LayerList>
      <LayerScroll>
        <Chevron dir="up" c="#8b8b8b" />
        <VThumb $top={74} $h={43} />
        <Chevron c="#8b8b8b" />
      </LayerScroll>
    </LayerArea>
    <LayerFoot>
      <FootIcon $dim><Ico s={16} vb="0 0 16 16"><St strokeWidth="1.300"><rect x="1" y="5" width="7" height="6" rx="3" /><rect x="8" y="5" width="7" height="6" rx="3" /></St></Ico></FootIcon>
      <FootIcon $tri><FxText>fx</FxText></FootIcon>
      <FootIcon><svg width="14" height="11" viewBox="0 0 14 11"><rect width="14" height="11" fill="#d4d4d4" /><circle cx="7" cy="5.500" r="3" fill="#444" /></svg></FootIcon>
      <FootIcon $tri><Ico s={14} vb="0 0 14 14"><circle cx="7" cy="7" r="5.500" fill="none" stroke="currentColor" /><path d="M11 3L3 11A5.500 5.500 0 0 1 11 3z" /></Ico></FootIcon>
      <FootIcon><Ico s={14} vb="0 0 14 14"><path d="M1 2h5l1.500 2H13v8H1z" /></Ico></FootIcon>
      <FootIcon><Ico s={14} vb="0 0 14 14"><path d="M2 1.500h10.500v11H7L2 8z" fill="none" stroke="currentColor" strokeWidth="1.200" /><path d="M2 8h5v4.500" fill="none" stroke="currentColor" strokeWidth="1.200" /></Ico></FootIcon>
      <FootIcon><Ico s={14} vb="0 0 14 14"><St strokeWidth="1.100"><path d="M1 3h12M3 3v10h8V3M5 1h4v2M5.500 5v6M8.500 5v6" /></St></Ico></FootIcon>
    </LayerFoot>
  </>
);

const App = () => (
  <>
    <GlobalStyle />
    <Shell>
      <TopEdge />
      <MenuRow />
      <Options />
      <Workspace>
        <Tools />
        <Document />
        <Right>
          <Strip $between><DoubleTri left /><DoubleTri /></Strip>
          <RightBody>
            <DockColumn />
            <Panels>
              <ColorPanel />
              <LayersPanel />
            </Panels>
          </RightBody>
        </Right>
      </Workspace>
    </Shell>
  </>
);

export default App;
